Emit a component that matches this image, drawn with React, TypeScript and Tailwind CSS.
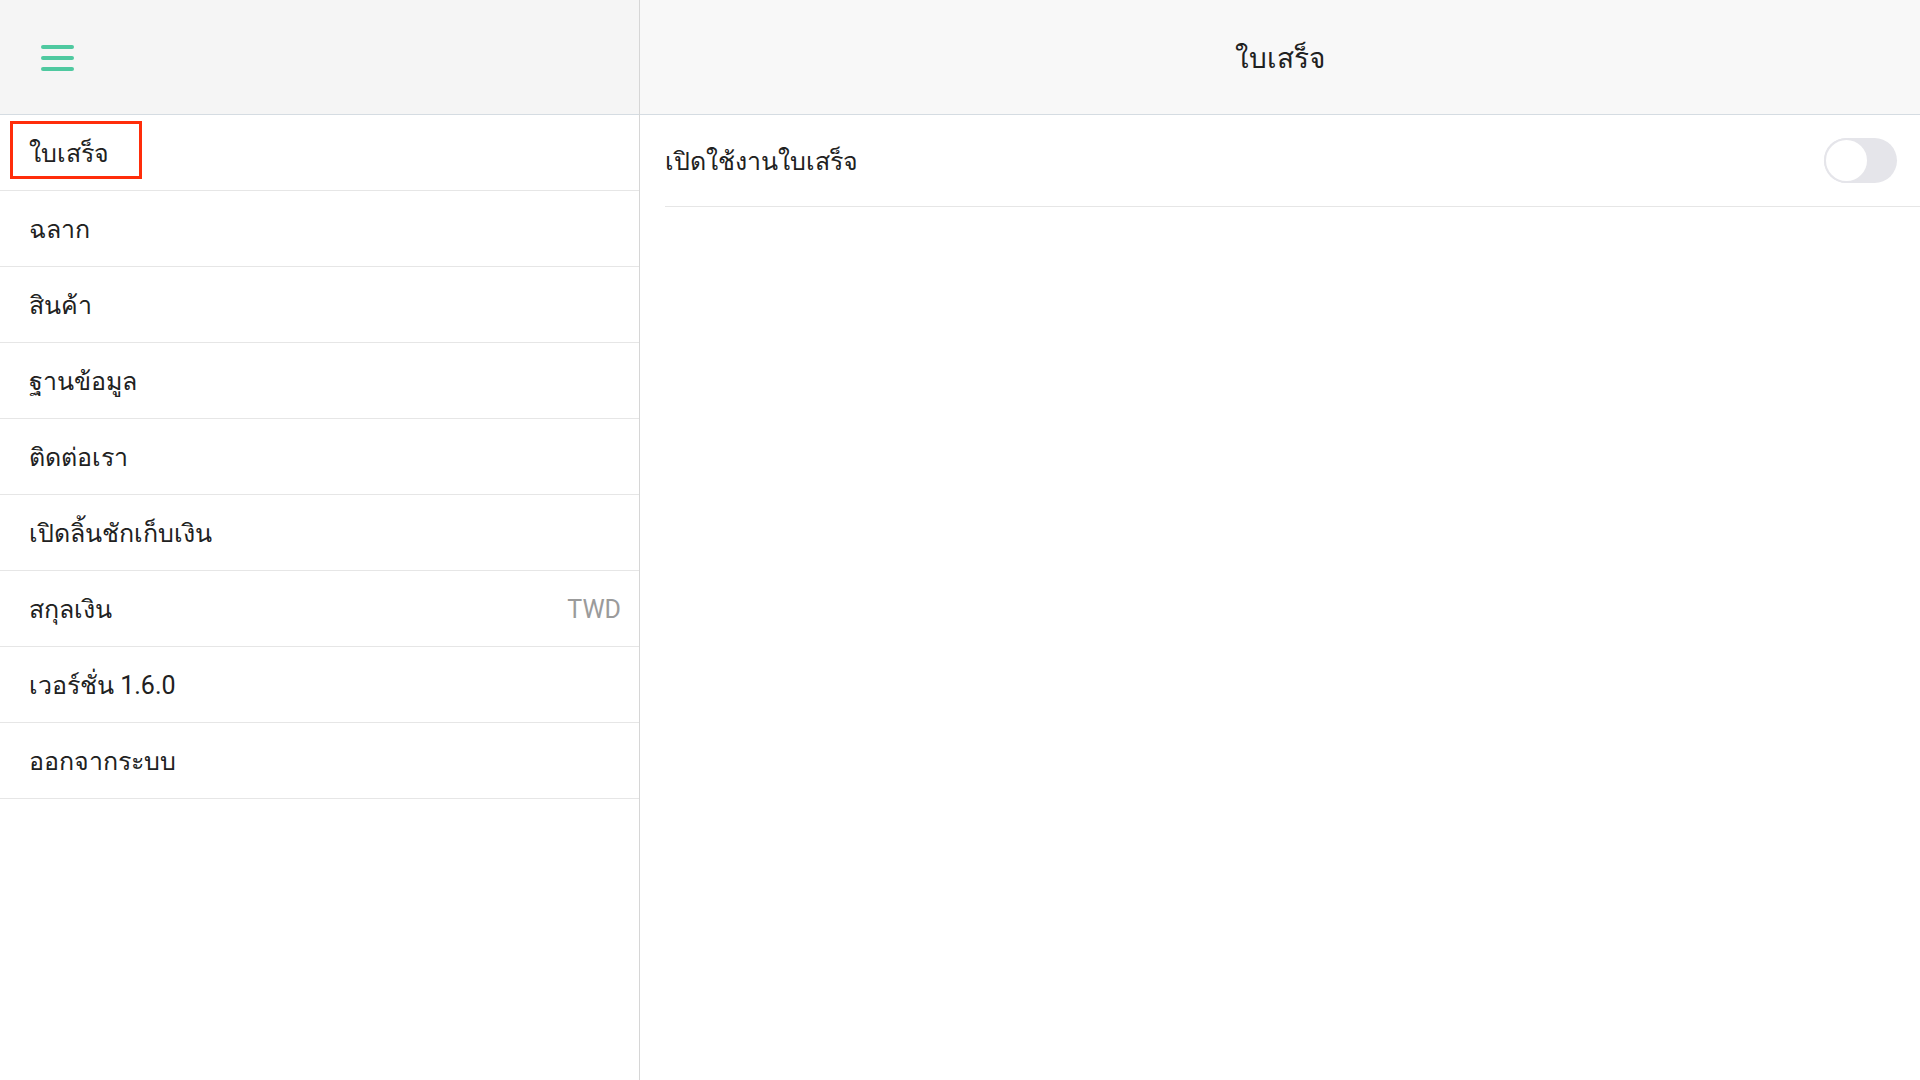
import React from "react";

const MENU: { label: string; value?: string }[] = [
  { label: "ใบเสร็จ" },
  { label: "ฉลาก" },
  { label: "สินค้า" },
  { label: "ฐานข้อมูล" },
  { label: "ติดต่อเรา" },
  { label: "เปิดลิ้นชักเก็บเงิน" },
  { label: "สกุลเงิน", value: "TWD" },
  { label: "เวอร์ชั่น 1.6.0" },
  { label: "ออกจากระบบ" },
];

function Toggle({ on }: { on: boolean }) {
  return (
    <div
      className={
        "w-[73px] h-[45px] rounded-full flex items-center " +
        (on ? "bg-[#4fc9a0] justify-end" : "bg-[#e5e5ea] justify-start")
      }
    >
      <div className="w-[45px] h-[45px] rounded-full bg-white border-2 border-[#e5e5ea]" />
    </div>
  );
}

export default function App() {
  const active = 0;
  return (
    <div
      className="flex w-[1920px] h-[1080px] bg-white text-[#212121]"
      style={{ fontFamily: 'Roboto, "Noto Sans", "DejaVu Sans", sans-serif' }}
    >
      <aside className="w-[640px] shrink-0 border-r border-[#d6d6d6] flex flex-col">
        <div className="h-[115px] shrink-0 bg-[#f5f5f5] border-b border-[#d5dce2] flex items-center pl-[41px] pt-[2px]">
          <div className="flex flex-col gap-[7px]">
            <span className="block w-[33px] h-[4px] rounded-full bg-[#4fc9a0]" />
            <span className="block w-[33px] h-[4px] rounded-full bg-[#4fc9a0]" />
            <span className="block w-[33px] h-[4px] rounded-full bg-[#4fc9a0]" />
          </div>
        </div>
        {MENU.map((m, i) => (
          <div
            key={m.label}
            className="relative h-[76px] shrink-0 border-b border-[#e6e6e6] flex items-center justify-between pl-[29px] pr-[18px] pt-[2px] text-[25px]"
          >
            <span>{m.label}</span>
            {m.value && <span className="text-[#9b9b9b]">{m.value}</span>}
            {i === active && (
              <div className="absolute left-[10px] top-[6px] w-[132px] h-[58px] border-[3px] border-[#ff2d0a]" />
            )}
          </div>
        ))}
      </aside>

      <main className="flex-1 flex flex-col">
        <div className="h-[115px] shrink-0 bg-[#f8f8f8] border-b border-[#d5dce2] flex items-center justify-center pt-[3px]">
          <span className="text-[28px]">ใบเสร็จ</span>
        </div>
        <div className="ml-[25px] h-[92px] border-b border-[#e6e6e6] flex items-center justify-between pr-[23px]">
          <span className="text-[25px] pt-[2px]">เปิดใช้งานใบเสร็จ</span>
          <Toggle on={false} />
        </div>
      </main>
    </div>
  );
}
